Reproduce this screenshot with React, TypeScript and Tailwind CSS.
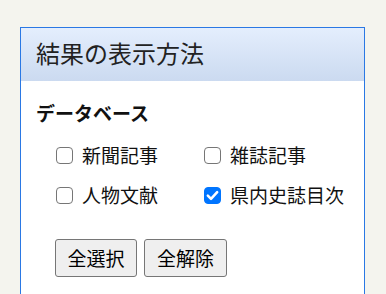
import { useState } from 'react'

const items = ['新聞記事', '雑誌記事', '人物文献', '県内史誌目次']

function Check({ on, onToggle }: { on: boolean; onToggle: (v: boolean) => void }) {
  return (
    <span className="relative block w-[17px] h-[17px] min-w-[17px] shrink-0">
      <input
        type="checkbox"
        checked={on}
        onChange={(e) => onToggle(e.target.checked)}
        className="appearance-none block w-[17px] h-[17px] m-0 p-0 rounded-[4px] border-[1.5px] border-[#767676] bg-white checked:bg-[#0075ff] checked:border-[#0075ff]"
      />
      {on && (
        <svg viewBox="0 0 16 16" className="absolute inset-0 w-[17px] h-[17px] pointer-events-none">
          <path d="M3.6 8.2 L6.6 11.2 L12.4 4.8" fill="none" stroke="white" strokeWidth="2.4" strokeLinecap="round" strokeLinejoin="round" />
        </svg>
      )}
    </span>
  )
}

export default function App() {
  const [checked, setChecked] = useState<Record<string, boolean>>({ 県内史誌目次: true })

  const setAll = (v: boolean) => {
    const next: Record<string, boolean> = {}
    items.forEach((i) => (next[i] = v))
    setChecked(next)
  }

  return (
    <div
      className="w-[386px] h-[294px] overflow-hidden bg-[#f4f4ee] pt-[27px] pl-[20px]"
      style={{ fontFamily: '"Noto Sans CJK JP", "Noto Sans", sans-serif' }}
    >
      <div className="w-[345px] h-[300px] border border-[#2a78e4] bg-white">
        {/* 見出し */}
        <div className="h-[53px] bg-gradient-to-b from-[#e4eefd] to-[#cbdaf0] pl-[15px] flex items-center">
          <h1 className="text-[24px] leading-[30px] text-[#222] -mt-[3px]">結果の表示方法</h1>
        </div>

        <div className="pl-[15px] pt-[18px]">
          <h2 className="text-[19px] leading-[28px] font-bold text-[#111]">データベース</h2>

          <div className="grid grid-cols-[148px_148px] pl-[20px] mt-[8px]">
            {items.map((item) => (
              <label key={item} className="flex items-center gap-[9px] h-[40px] text-[19px] text-[#111]">
                <Check
                  on={!!checked[item]}
                  onToggle={(v) => setChecked((prev) => ({ ...prev, [item]: v }))}
                />
                {item}
              </label>
            ))}
          </div>

          <div className="flex gap-[7px] pl-[19px] mt-[24px]">
            <button
              onClick={() => setAll(true)}
              className="w-[82px] h-[38px] rounded-[3px] border border-[#767676] bg-[#efefef] text-[19px] text-black"
            >
              全選択
            </button>
            <button
              onClick={() => setAll(false)}
              className="w-[83px] h-[38px] rounded-[3px] border border-[#767676] bg-[#efefef] text-[19px] text-black"
            >
              全解除
            </button>
          </div>
        </div>
      </div>
    </div>
  )
}
